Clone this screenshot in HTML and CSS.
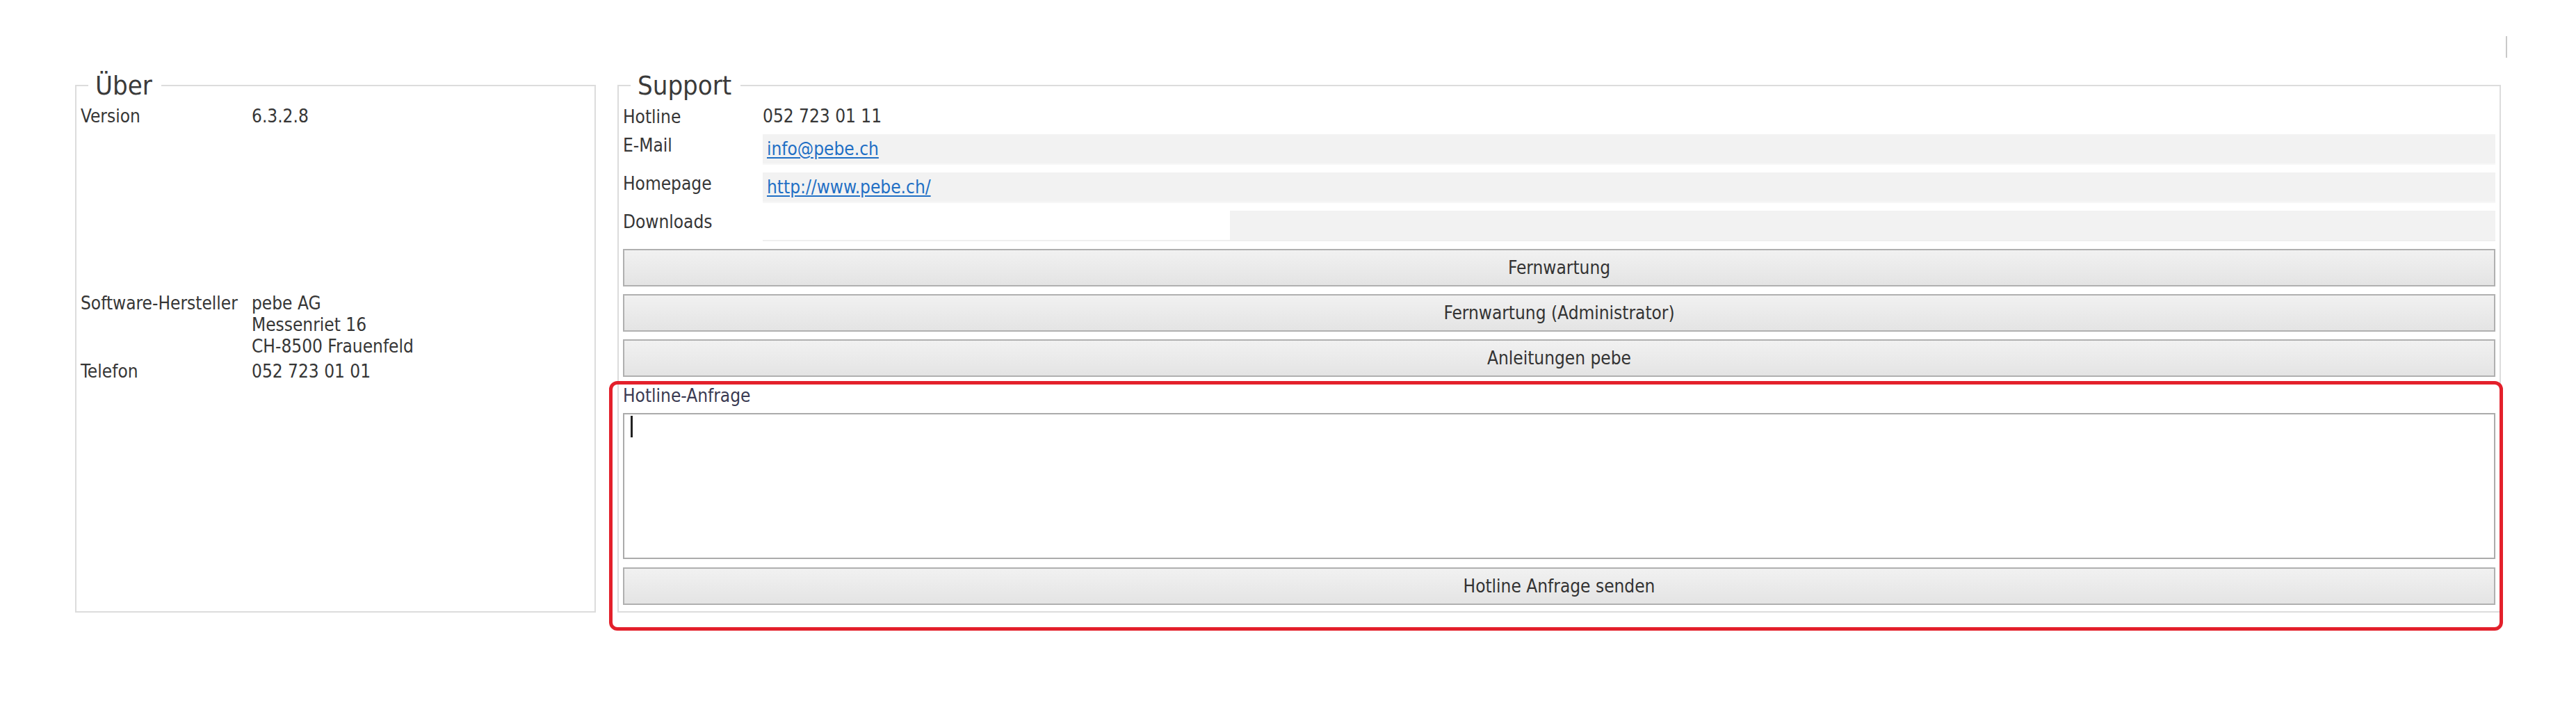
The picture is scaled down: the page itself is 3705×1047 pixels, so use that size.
FILE: index.html
```html
<!DOCTYPE html>
<html lang="de">
<head>
<meta charset="utf-8">
<title>Über / Support</title>
<link rel="stylesheet" href="styles.css">
</head>
<body>
<div class="page">
  <div class="columns">
    <fieldset class="group about">
      <legend class="group-title">Über</legend>
      <div class="info">
        <div class="info-label">Version</div>
        <div class="info-value">6.3.2.8</div>
      </div>
      <div class="info maker">
        <div class="info-label">Software-Hersteller</div>
        <div class="info-value">pebe AG<br>Messenriet 16<br>CH-8500 Frauenfeld</div>
      </div>
      <div class="info phone">
        <div class="info-label">Telefon</div>
        <div class="info-value">052 723 01 01</div>
      </div>
    </fieldset>

    <fieldset class="group support">
      <legend class="group-title">Support</legend>
      <div class="row row-plain">
        <div class="row-label">Hotline</div>
        <div class="row-value">052 723 01 11</div>
      </div>
      <div class="row">
        <div class="row-label">E-Mail</div>
        <div class="field"><a class="link" href="#">info@pebe.ch</a></div>
      </div>
      <div class="row">
        <div class="row-label">Homepage</div>
        <div class="field"><a class="link" href="#">http://www.pebe.ch/</a></div>
      </div>
      <div class="row">
        <div class="row-label">Downloads</div>
        <div class="field field-split"><div class="field-fill"></div></div>
      </div>
      <div class="buttons">
        <div class="btn">Fernwartung</div>
        <div class="btn">Fernwartung (Administrator)</div>
        <div class="btn">Anleitungen pebe</div>
      </div>
      <div class="request">
        <div class="request-label">Hotline-Anfrage</div>
        <div class="memo"><span class="caret"></span></div>
        <div class="btn">Hotline Anfrage senden</div>
      </div>
    </fieldset>
  </div>
  <div class="highlight"></div>
  <div class="edge-mark"></div>
</div>
</body>
</html>
```

FILE: styles.css
```css
html, body {
  margin: 0;
  padding: 0;
  background: #ffffff;
}

body {
  font-family: "DejaVu Sans Condensed", "DejaVu Sans", sans-serif;
  font-stretch: condensed;
  font-size: 26px;
  line-height: 31px;
  color: #363636;
}

.page {
  position: relative;
  width: 3705px;
  height: 1047px;
}

.columns {
  display: flex;
  align-items: stretch;
  gap: 31px;
  padding: 103px 0 0 108px;
}

.group {
  margin: 0;
  min-width: 0;
  border: 2px solid #dcdcdc;
  padding: 9px 6px 9px 6px;
  box-sizing: border-box;
}

.about {
  width: 749px;
}

.support {
  width: 2709px;
  display: flex;
  flex-direction: column;
}

.group-title {
  margin-left: 11px;
  padding: 0 13px 0 10px;
  font-size: 38px;
  line-height: 40px;
  color: #3a3a3a;
}

/* Über */
.info {
  display: flex;
}

.info-label {
  width: 246px;
  flex: none;
}

.maker {
  margin-top: 238px;
}

.phone {
  margin-top: 5px;
}

/* Support */
.row {
  display: flex;
  height: 44px;
  margin-bottom: 11px;
}

.row-plain {
  height: 41px;
  margin-bottom: 0;
}

.row-label {
  width: 201px;
  flex: none;
  padding-top: 1px;
}

.row-value {
  flex: 1;
}

.field {
  flex: 1;
  display: flex;
  align-items: center;
  padding-left: 6px;
  background: #f2f2f2;
  border-bottom: 2px solid #f7f7f7;
  box-sizing: border-box;
}

.field-split {
  background: #ffffff;
  padding-left: 672px;
  align-items: stretch;
  border-bottom: 2px solid #efefef;
}

.field-fill {
  flex: 1;
  background: #f2f2f2;
}

.link {
  color: #1f6fc5;
  text-decoration: underline;
  text-underline-offset: 3px;
}

.buttons {
  display: flex;
  flex-direction: column;
  gap: 11px;
}

.btn {
  height: 54px;
  box-sizing: border-box;
  border: 2px solid #b0b0b0;
  background: linear-gradient(#f1f1f1, #e4e4e4);
  display: flex;
  align-items: center;
  justify-content: center;
  color: #333333;
}

.request {
  margin-top: 12px;
  display: flex;
  flex-direction: column;
}

.request-label {
  color: #3a3a52;
  margin-bottom: 9px;
}

.memo {
  height: 210px;
  box-sizing: border-box;
  border: 2px solid #ababab;
  background: #ffffff;
  margin-bottom: 12px;
  padding: 2px 0 0 9px;
}

.caret {
  display: block;
  width: 3px;
  height: 31px;
  background: #222222;
}

/* annotation overlay */
.highlight {
  position: absolute;
  left: 876px;
  top: 548px;
  width: 2724px;
  height: 359px;
  box-sizing: border-box;
  border: 5px solid #e3202b;
  border-radius: 12px;
}

.edge-mark {
  position: absolute;
  left: 3604px;
  top: 52px;
  width: 2px;
  height: 31px;
  background: #c9c9c9;
}
```
